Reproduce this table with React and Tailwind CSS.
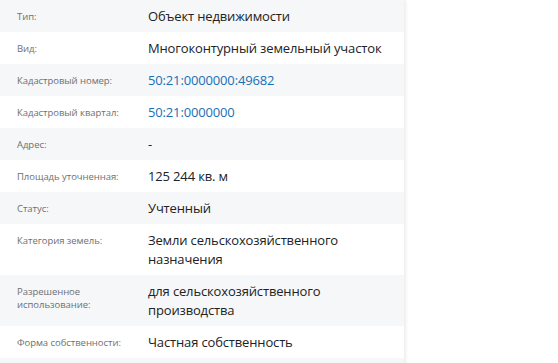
const rows = [
  { label: 'Тип:', value: 'Объект недвижимости' },
  { label: 'Вид:', value: 'Многоконтурный земельный участок' },
  { label: 'Кадастровый номер:', value: '50:21:0000000:49682', link: true },
  { label: 'Кадастровый квартал:', value: '50:21:0000000', link: true },
  { label: 'Адрес:', value: '-' },
  { label: 'Площадь уточненная:', value: '125 244 кв. м' },
  { label: 'Статус:', value: 'Учтенный' },
  { label: 'Категория земель:', value: 'Земли сельскохозяйственного назначения' },
  { label: 'Разрешенное использование:', value: 'для сельскохозяйственного производства' },
  { label: 'Форма собственности:', value: 'Частная собственность' },
  { label: '', value: '' },
];

export default function App() {
  return (
    <div className="h-[363px] overflow-hidden bg-white" style={{ fontFamily: '"Open Sans", "Noto Sans", sans-serif' }}>
      <div className="w-[404px] min-h-[363px] bg-white shadow-[2px_0_3px_rgba(0,0,0,0.07)]">
        {rows.map((row, i) => (
          <div
            key={i}
            className={`flex items-start py-[6.5px] ${i % 2 === 0 ? 'bg-[#f5f7f9]' : 'bg-white'}`}
          >
            <div className="w-[148px] shrink-0 pl-[17px] pr-2 pt-[3px] text-[9.5px] leading-[13px] tracking-[-0.05px] text-[#6f6f6f]">
              {row.label}
            </div>
            <div
              className={`flex-1 pr-2 text-[13px] leading-[19px] tracking-[-0.15px] ${row.link ? 'text-[#1a6fb5]' : 'text-[#222]'}`}
            >
              {row.value || '\u00a0'}
            </div>
          </div>
        ))}
      </div>
    </div>
  );
}
